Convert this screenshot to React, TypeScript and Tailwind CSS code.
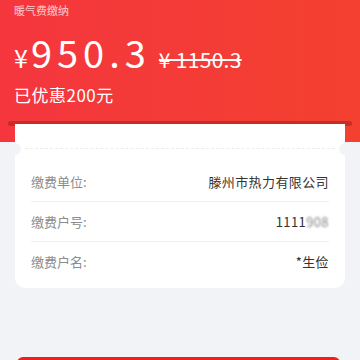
import React from "react";

const font = { fontFamily: '"Noto Sans CJK SC", "Noto Sans", sans-serif' };

function Row({ label, value, last }: { label: string; value: React.ReactNode; last?: boolean }) {
  return (
    <div className={`flex h-[40px] items-center justify-between ${last ? "" : "border-b border-[#f0f0f0]"}`}>
      <span className="text-[13px] text-[#8c8c8c]">{label}</span>
      <span className="text-[13px] tracking-[0.4px] text-[#333333]">{value}</span>
    </div>
  );
}

export default function App() {
  return (
    <div className="relative h-[360px] w-[360px] overflow-hidden bg-[#f2f3f7]" style={font}>
      <div className="h-[142px] bg-gradient-to-r from-[#f5363e] to-[#f3402f] px-[14px] pt-[3px] text-white">
        <p className="text-[11px] leading-[14px] text-white/75">暖气费缴纳</p>
        <div className="mt-[13px] flex h-[44px] items-baseline">
          <span className="text-[25px] leading-[44px]">¥</span>
          <span className="ml-[3px] text-[38px] font-normal leading-[44px] tracking-[5px]">950.3</span>
          <span className="ml-[8px] text-[21px] leading-[44px] tracking-[0.3px] line-through decoration-[1.5px]">
            ¥ 1150.3
          </span>
        </div>
        <p className="mt-[10px] text-[17px] leading-[22px] tracking-[0.5px]">已优惠200元</p>
        <div className="-mx-[6px] mt-[15px] h-[5px] rounded-full bg-[#c42e26]" />
      </div>

      <div className="relative z-10 mx-[15px] -mt-[18px] h-[164px] rounded-b-[10px] bg-white px-[16px] pb-[6px]">
        <div className="absolute -left-[6px] top-[19px] h-[12px] w-[12px] rounded-full bg-[#f2f3f7]" />
        <div className="absolute -right-[6px] top-[19px] h-[12px] w-[12px] rounded-full bg-[#f2f3f7]" />
        <div className="-mx-[6px] pt-[24px]">
          <div className="border-t border-dashed border-[#ececec]" />
        </div>
        <div className="mt-[13px]">
          <Row label="缴费单位:" value="滕州市热力有限公司" />
          <Row
            label="缴费户号:"
            value={
              <span>
                1111<span className="opacity-60 blur-[1.2px]">908</span>
              </span>
            }
          />
          <Row label="缴费户名:" value="*生俭" last />
        </div>
      </div>

      <div className="mx-[17px] mt-[69px] h-[20px] w-[323px] rounded-t-[6px] bg-[#f51c1c]" />
    </div>
  );
}
